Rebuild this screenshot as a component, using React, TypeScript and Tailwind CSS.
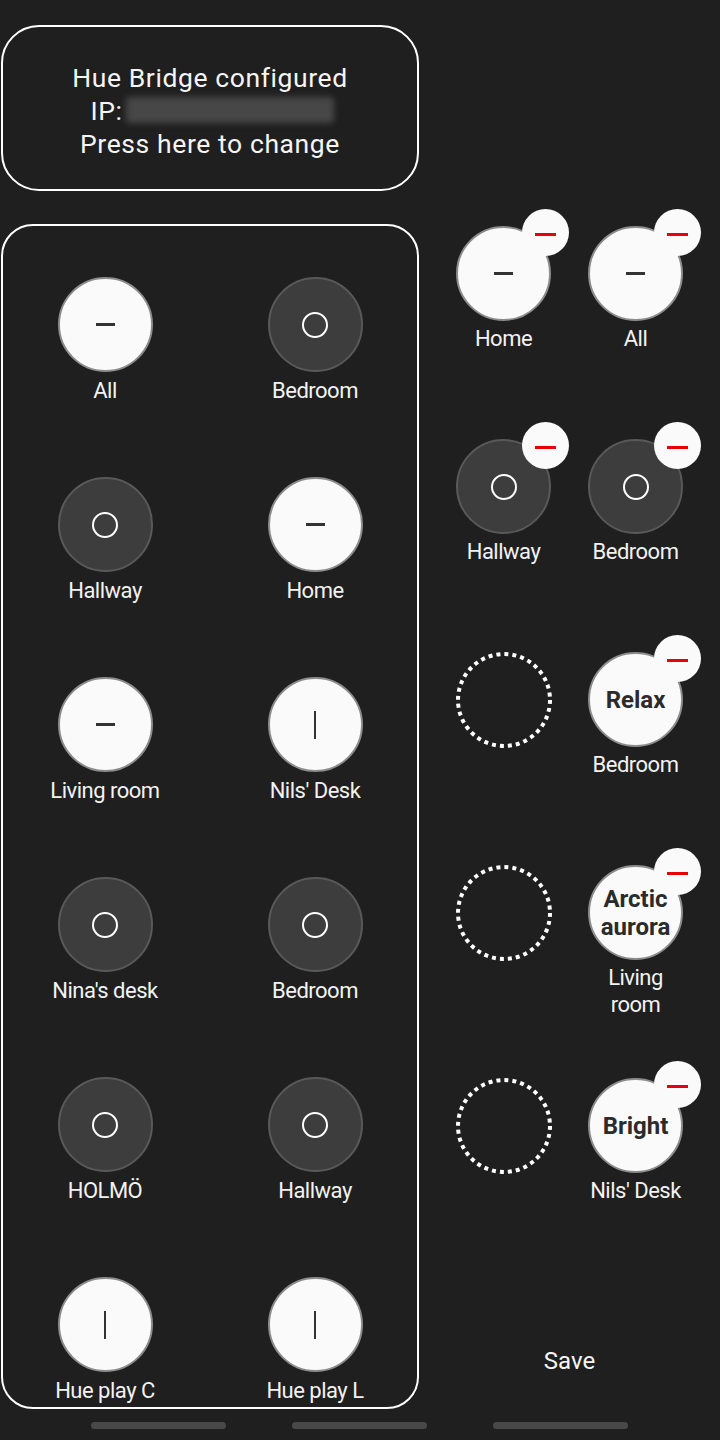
import React from "react";

type Mark = "dash" | "ring" | "bar";

interface Light {
  name: string;
  mark: Mark;
  on: boolean;
}

const leftLights: Light[] = [
  { name: "All", mark: "dash", on: true },
  { name: "Bedroom", mark: "ring", on: false },
  { name: "Hallway", mark: "ring", on: false },
  { name: "Home", mark: "dash", on: true },
  { name: "Living room", mark: "dash", on: true },
  { name: "Nils' Desk", mark: "bar", on: true },
  { name: "Nina's desk", mark: "ring", on: false },
  { name: "Bedroom", mark: "ring", on: false },
  { name: "HOLMÖ", mark: "ring", on: false },
  { name: "Hallway", mark: "ring", on: false },
  { name: "Hue play C", mark: "bar", on: true },
  { name: "Hue play L", mark: "bar", on: true },
];

type Slot =
  | { kind: "light"; light: Light }
  | { kind: "scene"; scene: string; room: string }
  | { kind: "empty" };

const slots: Slot[] = [
  { kind: "light", light: { name: "Home", mark: "dash", on: true } },
  { kind: "light", light: { name: "All", mark: "dash", on: true } },
  { kind: "light", light: { name: "Hallway", mark: "ring", on: false } },
  { kind: "light", light: { name: "Bedroom", mark: "ring", on: false } },
  { kind: "empty" },
  { kind: "scene", scene: "Relax", room: "Bedroom" },
  { kind: "empty" },
  { kind: "scene", scene: "Arctic aurora", room: "Living room" },
  { kind: "empty" },
  { kind: "scene", scene: "Bright", room: "Nils' Desk" },
];

function MarkIcon({ mark }: { mark: Mark }) {
  if (mark === "dash") return <div className="w-[19px] h-[3px] bg-[#333333]" />;
  if (mark === "bar") return <div className="w-[2px] h-[28px] bg-[#333333]" />;
  return <div className="w-[26px] h-[26px] rounded-full border-2 border-white" />;
}

function Bulb({ light, children }: { light: Light; children?: React.ReactNode }) {
  return (
    <div
      className={
        light.on
          ? "relative w-[95px] h-[95px] rounded-full bg-[#fafafa] border-2 border-[#8c8c8c] flex items-center justify-center"
          : "relative w-[95px] h-[95px] rounded-full bg-[#3d3d3d] border-2 border-[#595959] flex items-center justify-center"
      }
    >
      <MarkIcon mark={light.mark} />
      {children}
    </div>
  );
}

function RemoveBadge() {
  return (
    <div className="absolute left-[64px] top-[-19px] w-[47px] h-[47px] rounded-full bg-[#fafafa] flex items-center justify-center">
      <div className="w-[21px] h-[3px] bg-[#e8000b] mt-[3px]" />
    </div>
  );
}

function DottedSlot() {
  return (
    <svg width="96" height="96" viewBox="0 0 96 96">
      <circle
        cx="48"
        cy="48"
        r="46"
        fill="none"
        stroke="#ffffff"
        strokeWidth="4"
        strokeDasharray="4 4.03"
      />
    </svg>
  );
}

function Label({ text, narrow }: { text: string; narrow?: boolean }) {
  return (
    <div
      className={
        narrow
          ? "mt-[4px] w-[100px] text-center text-[22px] tracking-[-0.5px] leading-[27px] text-[#f2f2f2]"
          : "mt-[5px] text-center text-[22px] tracking-[-0.5px] leading-[27px] text-[#f2f2f2] whitespace-nowrap"
      }
    >
      {text}
    </div>
  );
}

export default function App() {
  return (
    <div className="w-[720px] h-[1440px] overflow-hidden bg-[#1f1f1f] pt-[25px] font-['Roboto',sans-serif] text-white">
      <div className="ml-[1px] w-[418px] h-[166px] rounded-[38px] border-2 border-white flex flex-col items-center justify-center pt-[4px] text-[26.5px] tracking-[0.6px] leading-[33px] text-[#f5f5f5]">
        <div>Hue Bridge configured</div>
        <div className="flex items-center pl-[4px]">
          <span>IP:</span>
          <div className="ml-[3px] w-[208px] h-[26px] bg-[#474747] blur-[3px] rounded-[4px]" />
        </div>
        <div>Press here to change</div>
      </div>

      <div className="mt-[33px] flex">
        <div className="ml-[1px] w-[418px] h-[1185px] shrink-0 overflow-hidden rounded-[32px] border-2 border-white pt-[51px]">
          <div className="grid grid-cols-[204px_204px] justify-between">
            {leftLights.map((light, i) => (
              <div key={i} className="h-[200px] flex flex-col items-center">
                <Bulb light={light} />
                <Label text={light.name} />
              </div>
            ))}
          </div>
        </div>

        <div className="flex-1 flex flex-col pt-[2px]">
          <div className="grid grid-cols-[132px_132px] justify-center">
            {slots.map((slot, i) => (
              <div key={i} className="h-[213px] flex flex-col items-center">
                {slot.kind === "empty" && <DottedSlot />}
                {slot.kind === "light" && (
                  <>
                    <Bulb light={slot.light}>
                      <RemoveBadge />
                    </Bulb>
                    <Label text={slot.light.name} narrow />
                  </>
                )}
                {slot.kind === "scene" && (
                  <>
                    <div className="relative w-[95px] h-[95px] rounded-full bg-[#fafafa] border-2 border-[#8c8c8c] flex items-center justify-center">
                      <div className="text-center text-[24px] leading-[28px] font-bold text-[#2b2b2b] w-[90px]">
                        {slot.scene}
                      </div>
                      <RemoveBadge />
                    </div>
                    <Label text={slot.room} narrow />
                  </>
                )}
              </div>
            ))}
          </div>
          <div className="mt-[55px] text-center text-[24px] leading-[30px] text-[#f5f5f5]">
            Save
          </div>
        </div>
      </div>

      <div className="mt-[13px] flex pl-[91px] gap-[66px]">
        <div className="w-[135px] h-[7px] rounded-full bg-[#484848]" />
        <div className="w-[135px] h-[7px] rounded-full bg-[#484848]" />
        <div className="w-[135px] h-[7px] rounded-full bg-[#484848]" />
      </div>
    </div>
  );
}
